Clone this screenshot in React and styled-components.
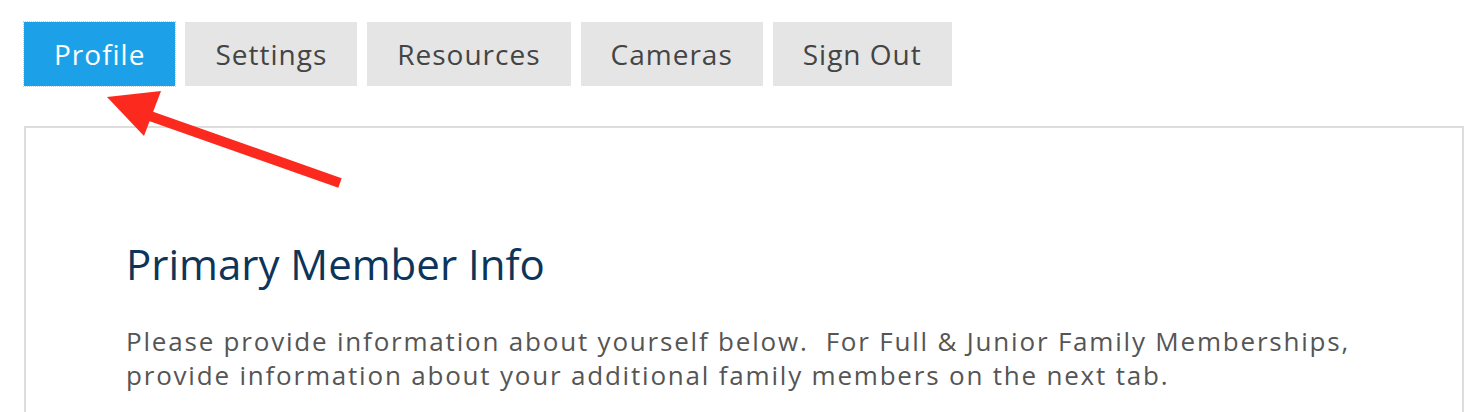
import React from "react";
import styled, { createGlobalStyle } from "styled-components";

const Global = createGlobalStyle`
  html, body { margin: 0; padding: 0; background: #fff; }
  body { font-family: "Open Sans", "Lato", sans-serif; }
`;

const Page = styled.div`
  position: relative;
  padding: 22px 20px 0 24px;
  height: 412px;
  box-sizing: border-box;
  overflow: hidden;
`;

const TabBar = styled.nav`
  display: flex;
  gap: 10px;
`;

const Tab = styled.button`
  height: 64px;
  padding: 0 30px;
  border: none;
  margin: 0;
  font-family: "Open Sans", sans-serif;
  font-size: 28px;
  letter-spacing: 1px;
  cursor: pointer;
  background: ${(p) => (p.$active ? "#1ca1e9" : "#e5e5e5")};
  color: ${(p) => (p.$active ? "#ffffff" : "#444444")};
  outline: ${(p) => (p.$active ? "1px dotted #cfcfcf" : "none")};
`;

const Panel = styled.section`
  margin-top: 40px;
  border: 2px solid #dddddd;
  padding: 111px 100px 60px 100px;
`;

const Heading = styled.h2`
  margin: 0 0 35px 0;
  font-family: "Open Sans", sans-serif;
  font-weight: 400;
  font-size: 42px;
  line-height: 1.2;
  color: #0d3459;
`;

const Body = styled.p`
  margin: 0;
  font-family: "Open Sans", sans-serif;
  font-size: 26px;
  line-height: 34px;
  letter-spacing: 1.8px;
  color: #555555;
  white-space: pre-wrap;
`;

const Arrow = styled.svg`
  position: absolute;
  left: 0;
  top: 0;
  pointer-events: none;
`;

const tabs = ["Profile", "Settings", "Resources", "Cameras", "Sign Out"];

export default function App() {
  return (
    <>
      <Global />
      <Page>
        <TabBar>
          {tabs.map((t, i) => (
            <Tab key={t} $active={i === 0}>
              {t}
            </Tab>
          ))}
        </TabBar>
        <Panel>
          <Heading>Primary Member Info</Heading>
          <Body>
            {"Please provide information about yourself below.  For Full & Junior Family Memberships,\nprovide information about your additional family members on the next tab."}
          </Body>
        </Panel>
        <Arrow width="400" height="220" viewBox="0 0 400 220">
          <line x1="150" y1="116" x2="340" y2="183" stroke="#fc2a1e" strokeWidth="10" />
          <polygon points="107,97 161,91 144,136" fill="#fc2a1e" />
        </Arrow>
      </Page>
    </>
  );
}
